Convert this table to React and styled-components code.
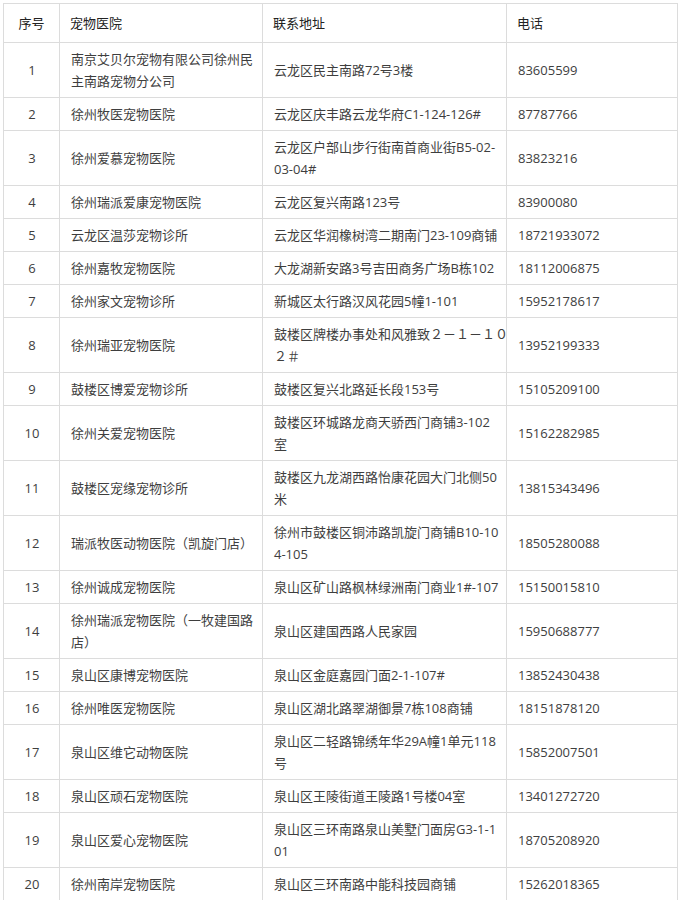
import React from 'react'
import styled, { createGlobalStyle } from 'styled-components'

const GlobalStyle = createGlobalStyle`
  html, body {
    margin: 0;
    padding: 0;
    background: #fff;
  }
`

const Page = styled.div`
  padding: 3px 0 0 3px;
  font-family: 'Open Sans', 'Noto Sans CJK SC', sans-serif;
  font-size: 13px;
  color: #3e3e3e;
`

const Table = styled.table`
  border-collapse: collapse;
  table-layout: fixed;
  width: 674px;
`

const Th = styled.th`
  border: 1px solid #dcdcdc;
  padding: 8px 10px;
  line-height: 22px;
  font-weight: normal;
  color: #222;
  text-align: ${(p) => (p.center ? 'center' : 'left')};
  vertical-align: middle;
`

const Td = styled.td`
  border: 1px solid #dcdcdc;
  padding: 5px 10px 5px 11px;
  line-height: 22px;
  text-align: ${(p) => (p.center ? 'center' : 'left')};
  vertical-align: middle;
  white-space: nowrap;
`

const rows = [
  ['1', ['南京艾贝尔宠物有限公司徐州民', '主南路宠物分公司'], ['云龙区民主南路72号3楼'], '83605599'],
  ['2', ['徐州牧医宠物医院'], ['云龙区庆丰路云龙华府C1-124-126#'], '87787766'],
  ['3', ['徐州爱慕宠物医院'], ['云龙区户部山步行街南首商业街B5-02-', '03-04#'], '83823216'],
  ['4', ['徐州瑞派爱康宠物医院'], ['云龙区复兴南路123号'], '83900080'],
  ['5', ['云龙区温莎宠物诊所'], ['云龙区华润橡树湾二期南门23-109商铺'], '18721933072'],
  ['6', ['徐州嘉牧宠物医院'], ['大龙湖新安路3号吉田商务广场B栋102'], '18112006875'],
  ['7', ['徐州家文宠物诊所'], ['新城区太行路汉风花园5幢1-101'], '15952178617'],
  ['8', ['徐州瑞亚宠物医院'], ['鼓楼区牌楼办事处和风雅致２－１－１０', '２＃'], '13952199333'],
  ['9', ['鼓楼区博爱宠物诊所'], ['鼓楼区复兴北路延长段153号'], '15105209100'],
  ['10', ['徐州关爱宠物医院'], ['鼓楼区环城路龙商天骄西门商铺3-102', '室'], '15162282985'],
  ['11', ['鼓楼区宠缘宠物诊所'], ['鼓楼区九龙湖西路怡康花园大门北侧50', '米'], '13815343496'],
  ['12', ['瑞派牧医动物医院（凯旋门店）'], ['徐州市鼓楼区铜沛路凯旋门商铺B10-10', '4-105'], '18505280088'],
  ['13', ['徐州诚成宠物医院'], ['泉山区矿山路枫林绿洲南门商业1#-107'], '15150015810'],
  ['14', ['徐州瑞派宠物医院（一牧建国路', '店）'], ['泉山区建国西路人民家园'], '15950688777'],
  ['15', ['泉山区康博宠物医院'], ['泉山区金庭嘉园门面2-1-107#'], '13852430438'],
  ['16', ['徐州唯医宠物医院'], ['泉山区湖北路翠湖御景7栋108商铺'], '18151878120'],
  ['17', ['泉山区维它动物医院'], ['泉山区二轻路锦绣年华29A幢1单元118', '号'], '15852007501'],
  ['18', ['泉山区顽石宠物医院'], ['泉山区王陵街道王陵路1号楼04室'], '13401272720'],
  ['19', ['泉山区爱心宠物医院'], ['泉山区三环南路泉山美墅门面房G3-1-1', '01'], '18705208920'],
  ['20', ['徐州南岸宠物医院'], ['泉山区三环南路中能科技园商铺'], '15262018365'],
]

const Lines = ({ lines }) =>
  lines.map((line, i) => (
    <React.Fragment key={i}>
      {i > 0 && <br />}
      {line}
    </React.Fragment>
  ))

export default function App() {
  return (
    <Page>
      <GlobalStyle />
      <Table>
        <colgroup>
          <col style={{ width: 56 }} />
          <col style={{ width: 203 }} />
          <col style={{ width: 244 }} />
          <col style={{ width: 171 }} />
        </colgroup>
        <thead>
          <tr>
            <Th center>序号</Th>
            <Th>宠物医院</Th>
            <Th>联系地址</Th>
            <Th>电话</Th>
          </tr>
        </thead>
        <tbody>
          {rows.map(([no, name, addr, tel]) => (
            <tr key={no}>
              <Td center>{no}</Td>
              <Td>
                <Lines lines={name} />
              </Td>
              <Td>
                <Lines lines={addr} />
              </Td>
              <Td>{tel}</Td>
            </tr>
          ))}
        </tbody>
      </Table>
    </Page>
  )
}
